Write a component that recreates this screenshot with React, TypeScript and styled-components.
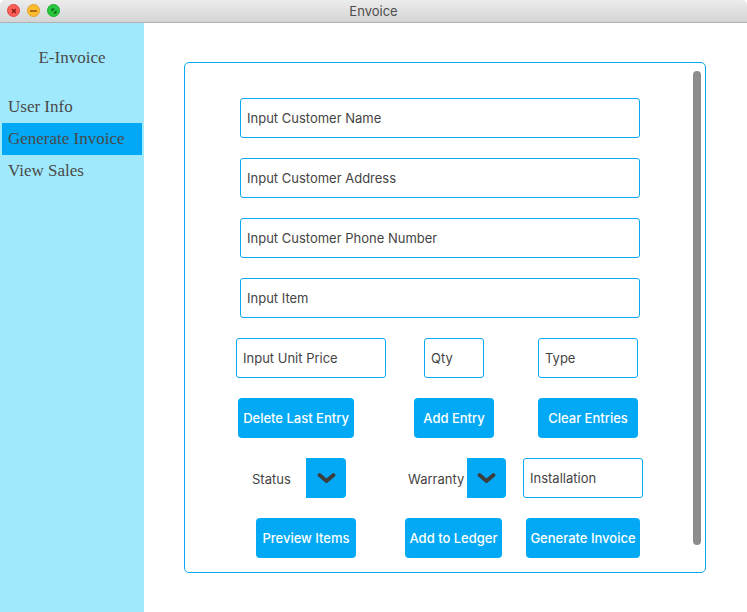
import React from 'react';
import styled, { createGlobalStyle } from 'styled-components';

const GlobalStyle = createGlobalStyle`
  html, body {
    margin: 0;
    padding: 0;
    background: #ffffff;
  }
  * {
    box-sizing: border-box;
  }
`;

const Window = styled.div`
  width: 747px;
  height: 612px;
  display: flex;
  flex-direction: column;
  overflow: hidden;
  font-family: 'Inter', 'Liberation Sans', sans-serif;
`;

const TitleBar = styled.div`
  height: 23px;
  flex: none;
  position: relative;
  display: flex;
  align-items: center;
  justify-content: center;
  background: linear-gradient(#ececec, #d4d4d4);
  border-bottom: 1px solid #b1b1b1;
  border-radius: 5px 5px 0 0;
  font-size: 13px;
  color: #4d4d4d;
`;

const Lights = styled.div`
  position: absolute;
  left: 7px;
  top: 4px;
  display: flex;
  gap: 7px;
`;

const Light = styled.span<{ $bg: string; $edge: string }>`
  width: 13px;
  height: 13px;
  border-radius: 50%;
  background: ${(p) => p.$bg};
  border: 1px solid ${(p) => p.$edge};
  display: flex;
  align-items: center;
  justify-content: center;
`;

const Body = styled.div`
  flex: 1;
  display: flex;
  min-height: 0;
`;

const Sidebar = styled.nav`
  width: 144px;
  flex: none;
  background: #a0e9fd;
  padding: 0 2px;
  font-family: 'Liberation Serif', 'Times New Roman', serif;
  color: #4a4a4a;
`;

const Brand = styled.div`
  height: 68px;
  display: flex;
  align-items: center;
  justify-content: center;
  padding-top: 2px;
  font-size: 17px;
`;

const MenuItem = styled.div<{ $active?: boolean }>`
  height: 32px;
  display: flex;
  align-items: center;
  padding-left: 6px;
  font-size: 17px;
  background: ${(p) => (p.$active ? '#00a8f5' : 'transparent')};
`;

const Main = styled.main`
  flex: 1;
  padding: 39px 41px 0 40px;
`;

const Panel = styled.div`
  position: relative;
  width: 522px;
  height: 511px;
  border: 1px solid #0aa9f3;
  border-radius: 5px;
  padding-top: 35px;
  display: flex;
  flex-direction: column;
  gap: 20px;
`;

const Scrollbar = styled.div`
  position: absolute;
  left: 508px;
  top: 8px;
  width: 8px;
  height: 474px;
  border-radius: 4px;
  background: #8d8d8d;
`;

const Row = styled.div`
  height: 40px;
  display: flex;
  align-items: stretch;
`;

const Field = styled.div<{ $w: number; $ml: number }>`
  width: ${(p) => p.$w}px;
  margin-left: ${(p) => p.$ml}px;
  border: 1px solid #0aa9f3;
  border-radius: 3px;
  display: flex;
  align-items: center;
  padding-left: 6px;
  padding-bottom: 1px;
  font-size: 13px;
  color: #444;
`;

const Button = styled.div<{ $w: number; $ml: number }>`
  width: ${(p) => p.$w}px;
  margin-left: ${(p) => p.$ml}px;
  background: #03a9f4;
  border-radius: 4px;
  display: flex;
  align-items: center;
  justify-content: center;
  color: #ffffff;
  font-size: 13px;
  font-weight: 500;
  white-space: nowrap;
`;

const Label = styled.div<{ $w: number; $ml: number }>`
  width: ${(p) => p.$w}px;
  margin-left: ${(p) => p.$ml}px;
  display: flex;
  align-items: center;
  padding-top: 1px;
  font-size: 13px;
  color: #444;
`;

const Dropdown = styled.div<{ $w: number }>`
  width: ${(p) => p.$w}px;
  background: #03a9f4;
  border-radius: 0 4px 4px 0;
  display: flex;
  align-items: center;
  justify-content: center;
`;

const Chevron = () => (
  <svg width="19" height="12" viewBox="0 0 19 12">
    <path d="M2.5 3 L9.5 9 L16.5 3" fill="none" stroke="#3d3d3d" strokeWidth="3.8" strokeLinecap="round" strokeLinejoin="round" />
  </svg>
);

const App: React.FC = () => {
  return (
    <Window>
      <GlobalStyle />
      <TitleBar>
        <Lights>
          <Light $bg="#fc5f57" $edge="#df4744">
            <svg width="6" height="6" viewBox="0 0 6 6">
              <path d="M1 1 L5 5 M5 1 L1 5" stroke="#8c1a14" strokeWidth="1.4" />
            </svg>
          </Light>
          <Light $bg="#fdbc2e" $edge="#dea02a">
            <svg width="7" height="2" viewBox="0 0 7 2">
              <path d="M0 1 H7" stroke="#985712" strokeWidth="1.6" />
            </svg>
          </Light>
          <Light $bg="#28c840" $edge="#1aab29">
            <svg width="6" height="6" viewBox="0 0 6 6">
              <path d="M0.5 0.5 H4 L0.5 4 Z M5.5 5.5 H2 L5.5 2 Z" fill="#0a6517" />
            </svg>
          </Light>
        </Lights>
        Envoice
      </TitleBar>
      <Body>
        <Sidebar>
          <Brand>E-Invoice</Brand>
          <MenuItem>User Info</MenuItem>
          <MenuItem $active>Generate Invoice</MenuItem>
          <MenuItem>View Sales</MenuItem>
        </Sidebar>
        <Main>
          <Panel>
            <Row>
              <Field $w={400} $ml={55}>Input Customer Name</Field>
            </Row>
            <Row>
              <Field $w={400} $ml={55}>Input Customer Address</Field>
            </Row>
            <Row>
              <Field $w={400} $ml={55}>Input Customer Phone Number</Field>
            </Row>
            <Row>
              <Field $w={400} $ml={55}>Input Item</Field>
            </Row>
            <Row>
              <Field $w={150} $ml={51}>Input Unit Price</Field>
              <Field $w={60} $ml={38}>Qty</Field>
              <Field $w={100} $ml={54}>Type</Field>
            </Row>
            <Row>
              <Button $w={116} $ml={53}>Delete Last Entry</Button>
              <Button $w={80} $ml={60}>Add Entry</Button>
              <Button $w={100} $ml={44}>Clear Entries</Button>
            </Row>
            <Row>
              <Label $w={54} $ml={67}>Status</Label>
              <Dropdown $w={40}>
                <Chevron />
              </Dropdown>
              <Label $w={59} $ml={62}>Warranty</Label>
              <Dropdown $w={39}>
                <Chevron />
              </Dropdown>
              <Field $w={120} $ml={17}>Installation</Field>
            </Row>
            <Row>
              <Button $w={100} $ml={71}>Preview Items</Button>
              <Button $w={97} $ml={49}>Add to Ledger</Button>
              <Button $w={114} $ml={24}>Generate Invoice</Button>
            </Row>
            <Scrollbar />
          </Panel>
        </Main>
      </Body>
    </Window>
  );
};

export default App;
